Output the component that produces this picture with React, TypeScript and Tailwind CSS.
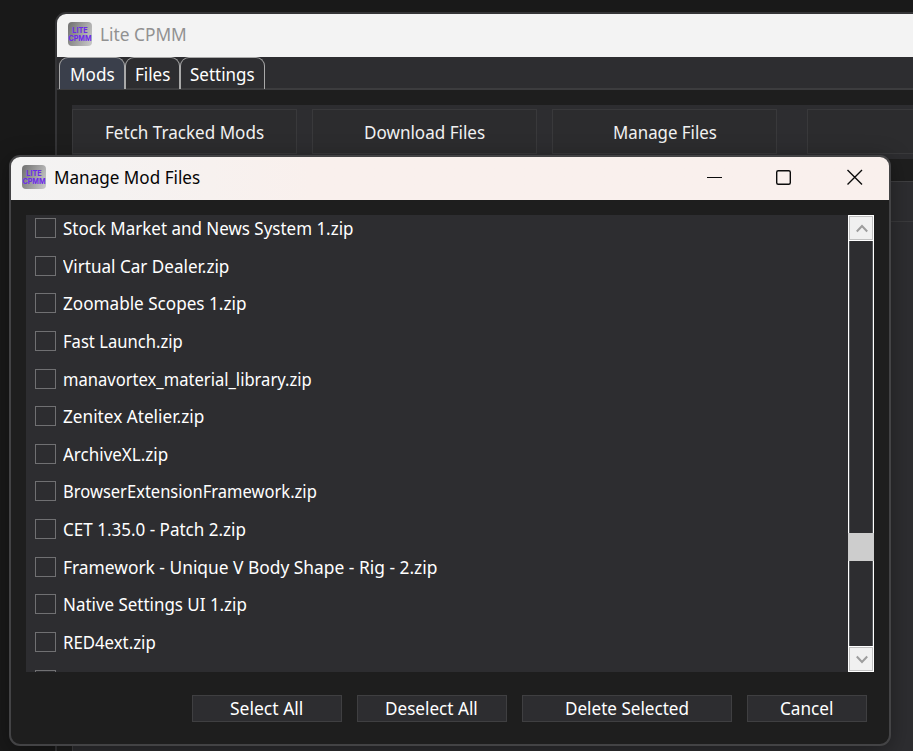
import { useLayoutEffect, useRef } from "react";

type TextProps = { children: string; w: number; className?: string };

// Text condensed or widened horizontally to an exact advance width.
function Text({ children, w, className = "" }: TextProps) {
  const ref = useRef<HTMLSpanElement>(null);
  useLayoutEffect(() => {
    const el = ref.current;
    if (el) el.style.transform = `scaleX(${w / el.offsetWidth})`;
  }, [w]);
  return (
    <span className="block shrink-0" style={{ width: w }}>
      <span ref={ref} className={`inline-block origin-left whitespace-pre ${className}`}>
        {children}
      </span>
    </span>
  );
}

function AppIcon() {
  return (
    <svg className="size-6 shrink-0" viewBox="0 0 24 24">
      <defs>
        <linearGradient id="metal" x1="0" y1="0.3" x2="1" y2="0.7">
          <stop offset="0" stopColor="#777" />
          <stop offset="1" stopColor="#c4c4c4" />
        </linearGradient>
      </defs>
      <rect width="24" height="24" rx="4" fill="url(#metal)" />
      <g fill="#6c2bea" fontFamily="Inter, sans-serif" fontWeight="700" fontSize="8" textAnchor="middle">
        <text x="12" y="11.2" textLength="15.5" lengthAdjust="spacingAndGlyphs">LITE</text>
        <text x="12" y="18.6" textLength="23" lengthAdjust="spacingAndGlyphs">CPMM</text>
      </g>
    </svg>
  );
}

const files: [string, number][] = [
  ["Stock Market and News System 1.zip", 290],
  ["Virtual Car Dealer.zip", 166],
  ["Zoomable Scopes 1.zip", 183],
  ["Fast Launch.zip", 119.5],
  ["manavortex_material_library.zip", 249],
  ["Zenitex Atelier.zip", 141.5],
  ["ArchiveXL.zip", 105],
  ["BrowserExtensionFramework.zip", 254],
  ["CET 1.35.0 - Patch 2.zip", 183],
  ["Framework - Unique V Body Shape - Rig - 2.zip", 374],
  ["Native Settings UI 1.zip", 184],
  ["RED4ext.zip", 93],
  ["TweakXL.zip", 96],
];

const tab = "flex h-[32px] items-center justify-center rounded-t-[9px] border border-b-0 border-[#a9a9a9] pt-px";
const toolButton = "flex h-[45px] shrink-0 items-center justify-center border border-[#39393b] bg-[#2c2c2e] pt-px";
const dialogButton = "flex h-[27px] items-center justify-center border border-[#3f3f41] bg-[#2d2d30] pr-px pb-[2px]";

function MainWindow() {
  return (
    <div className="absolute top-[12px] left-[55px] h-[760px] w-[900px] overflow-hidden rounded-tl-[11px] border-2 border-[#343436] bg-[#1e1e1e]">
      <div className="flex h-[43px] items-center gap-2 bg-[#f3f3f3] pb-[3px] pl-[11px] text-[#919191]">
        <AppIcon />
        <Text w={87}>Lite CPMM</Text>
      </div>
      <div className="flex h-[33px] items-start border-b-2 border-[#3c3c3e] bg-[#2d2d30] pl-[2px] text-white">
        <div className={`${tab} w-[66px] bg-[#3a3f4b]`}><Text w={45}>Mods</Text></div>
        <div className={`${tab} w-[55px]`}><Text w={35}>Files</Text></div>
        <div className={`${tab} w-[85px]`}><Text w={65}>Settings</Text></div>
      </div>
      <div className="mt-[15px] ml-[15px] flex h-[54px] items-start bg-[#2d2d30] pt-[4px] text-[#f1f1f1]">
        <div className={`${toolButton} w-[225px]`}><Text w={159}>Fetch Tracked Mods</Text></div>
        <div className={`${toolButton} ml-[15px] w-[225px]`}><Text w={121}>Download Files</Text></div>
        <div className={`${toolButton} ml-[15px] w-[225px]`}><Text w={104}>Manage Files</Text></div>
        <div className={`${toolButton} ml-[30px] w-[225px]`} />
      </div>
      <div className="mt-[22px] ml-[15px] h-[640px] border border-[#3f3f41] bg-[#2d2d30]">
        <div className="h-[40px] border-b border-[#3a3a3c]" />
      </div>
    </div>
  );
}

function ScrollBar() {
  return (
    <div className="flex w-[26px] shrink-0 flex-col border-x border-white bg-[#2d2d30]">
      <div className="-mx-px flex h-[26px] items-center justify-center border border-white bg-[#f0f0f0]">
        <div className="flex h-6 w-6 items-center justify-center border border-[#c0c0c0]">
          <svg className="mt-px ml-px h-[9px] w-[12px]" viewBox="0 0 12 9" fill="none" stroke="#9d9d9d" strokeWidth="2"><path d="M.8 7.500 6 2l5.200 5.500" /></svg>
        </div>
      </div>
      <div className="flex-1 border-x border-[#55585b]" />
      <div className="-mx-px h-[28px] bg-[#cdcdcd]" />
      <div className="h-[85px] border-x border-[#55585b]" />
      <div className="-mx-px flex h-[26px] items-center justify-center border border-white bg-[#f0f0f0]">
        <div className="flex h-6 w-6 items-center justify-center border border-[#c0c0c0]">
          <svg className="ml-px h-[9px] w-[12px]" viewBox="0 0 12 9" fill="none" stroke="#9d9d9d" strokeWidth="2"><path d="M.8 1.500 6 7l5.200-5.500" /></svg>
        </div>
      </div>
    </div>
  );
}

function Dialog() {
  return (
    <div className="absolute top-[155px] left-[9px] flex h-[591px] w-[882px] flex-col overflow-hidden rounded-[11px] border-2 border-[#434345] bg-[#1e1e1e] shadow-[0_4px_22px_rgba(0,0,0,0.35)]">
      <div className="flex h-[43px] shrink-0 items-center bg-linear-to-r from-[#f3f3f3] to-[#f9f0ed] to-[34%] pb-[3px] pl-[11px] text-[#050505]">
        <AppIcon />
        <div className="ml-[8px]"><Text w={146.5}>Manage Mod Files</Text></div>
        <svg className="mr-[25px] ml-auto h-4 w-[157px]" viewBox="0 0 157 16" fill="none" stroke="#0c0c0c">
          <path d="M0 8.500h15" strokeWidth="1" />
          <rect x="69.700" y="1.700" width="13.600" height="13.600" rx="1.500" strokeWidth="1.4" />
          <path d="m140.500 1 14.500 14.500M155 1l-14.500 14.500" strokeWidth="1.4" />
        </svg>
      </div>
      <div className="mx-[15px] mt-[15px] flex h-[457px] shrink-0 overflow-hidden bg-[#2d2d30]">
        <div className="flex-1 overflow-hidden pt-[3px] pl-[9px]">
          {files.map(([name, w]) => (
            <div key={name} className="flex h-[37.65px] items-start">
              <div className="h-[20px] w-[21px] shrink-0 border border-[#707072]" />
              <div className="ml-[7.4px] h-[20px] leading-[20px] text-white"><Text w={w}>{name}</Text></div>
            </div>
          ))}
        </div>
        <ScrollBar />
      </div>
      <div className="mt-[23px] mr-[22px] flex justify-end gap-[15px] text-white">
        <div className={`${dialogButton} w-[150px]`}><Text w={73}>Select All</Text></div>
        <div className={`${dialogButton} w-[150px]`}><Text w={93}>Deselect All</Text></div>
        <div className={`${dialogButton} w-[210px]`}><Text w={124}>Delete Selected</Text></div>
        <div className={`${dialogButton} w-[120px]`}><Text w={53}>Cancel</Text></div>
      </div>
    </div>
  );
}

export default function App() {
  return (
    <div className="relative h-[751px] w-[913px] overflow-hidden bg-[#191919] font-['Noto_Sans','Open_Sans',sans-serif] text-[17.5px] leading-[24px]">
      <MainWindow />
      <Dialog />
    </div>
  );
}
